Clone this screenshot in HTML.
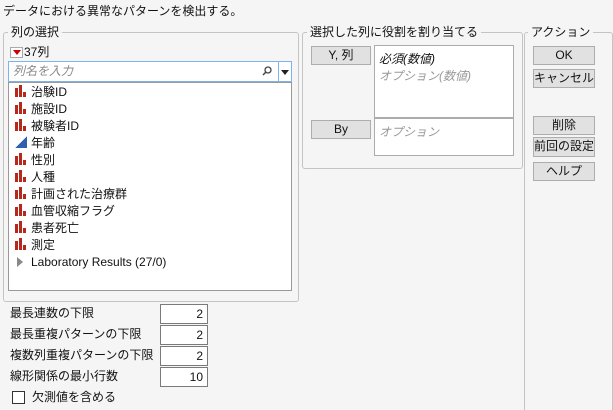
<!DOCTYPE html>
<html><head><meta charset="utf-8"><style>
html,body{margin:0;width:613px;height:410px;overflow:hidden}
body{background:#f5f5f5;font-family:"Liberation Sans","Noto Sans CJK JP",sans-serif;font-size:12px;color:#111;position:relative}
.a{position:absolute;white-space:nowrap}
.grp{position:absolute;border:1px solid #c4c4c4;border-radius:3px}
.lg{position:absolute;background:#f5f5f5;padding:0 3px;top:-9px;line-height:16px}
.btn{position:absolute;background:#e1e1e1;border:1px solid #adadad;text-align:center;line-height:17px;box-sizing:border-box}
.box{position:absolute;background:#fff;border:1px solid #acacac;box-sizing:border-box}
.it{position:absolute;left:6px;height:17px;line-height:17px}
.it i{display:inline-block;width:12px;height:12px;vertical-align:-1px;margin-right:4px}
.b{background:linear-gradient(#b5281b,#b5281b) 0 3px/3px 9px no-repeat,linear-gradient(#b5281b,#b5281b) 4px 0/3px 12px no-repeat,linear-gradient(#b5281b,#b5281b) 8px 7px/3px 5px no-repeat}
.num{position:absolute;left:160px;width:48px;height:20px;background:#fff;border:1px solid #7a7a7a;box-sizing:border-box;text-align:right;padding-right:4px;line-height:18px}
.gy{color:#999;font-style:italic}
</style></head><body>
<div class="a" style="left:3px;top:3px;line-height:16px">データにおける異常なパターンを検出する。</div>

<div class="grp" style="left:3px;top:32px;width:294px;height:268px">
 <div class="lg" style="left:4px">列の選択</div>
</div>
<div class="a" style="left:10px;top:47px;width:11px;height:9px;background:#fff;border:1px solid #aaa"><div style="position:absolute;left:2px;top:2px;border-left:4px solid transparent;border-right:4px solid transparent;border-top:5px solid #c00"></div></div>
<div class="a" style="left:24px;top:44px;line-height:16px">37列</div>
<div class="box" style="left:8px;top:61px;width:284px;height:21px;border-color:#7eb4ea"></div>
<div class="a gy" style="left:13px;top:63px;line-height:16px;color:#888">列名を入力</div>
<svg class="a" style="left:262px;top:66px" width="10" height="10"><circle cx="6" cy="4" r="3" fill="none" stroke="#444" stroke-width="1.3"/><line x1="4" y1="6" x2="1" y2="9" stroke="#444" stroke-width="1.5"/></svg>
<div class="a" style="left:278px;top:61px;width:1px;height:21px;background:#7eb4ea"></div>
<div class="a" style="left:281px;top:70px;border-left:4px solid transparent;border-right:4px solid transparent;border-top:5px solid #222"></div>
<div class="box" style="left:8px;top:82px;width:284px;height:209px;border-color:#999">
 <div class="it" style="top:1px"><i class="b"></i>治験ID</div>
 <div class="it" style="top:18px"><i class="b"></i>施設ID</div>
 <div class="it" style="top:35px"><i class="b"></i>被験者ID</div>
 <div class="it" style="top:52px"><i style="background:linear-gradient(to top left,#2f5faf 50%,transparent 50%)"></i>年齢</div>
 <div class="it" style="top:69px"><i class="b"></i>性別</div>
 <div class="it" style="top:86px"><i class="b"></i>人種</div>
 <div class="it" style="top:103px"><i class="b"></i>計画された治療群</div>
 <div class="it" style="top:120px"><i class="b"></i>血管収縮フラグ</div>
 <div class="it" style="top:137px"><i class="b"></i>患者死亡</div>
 <div class="it" style="top:154px"><i class="b"></i>測定</div>
 <div class="it" style="top:171px;left:8px"><span style="display:inline-block;width:0;height:0;border-top:5px solid transparent;border-bottom:5px solid transparent;border-left:6px solid #888;margin-right:8px;vertical-align:-1px"></span>Laboratory Results (27/0)</div>
</div>

<div class="grp" style="left:302px;top:32px;width:219px;height:135px">
 <div class="lg" style="left:4px">選択した列に役割を割り当てる</div>
</div>
<div class="btn" style="left:311px;top:46px;width:60px;height:19px">Y, 列</div>
<div class="box" style="left:374px;top:45px;width:140px;height:73px">
 <div class="a" style="left:4px;top:4px;font-style:italic">必須(数値)</div>
 <div class="a gy" style="left:4px;top:21px">オプション(数値)</div>
</div>
<div class="btn" style="left:311px;top:120px;width:60px;height:19px">By</div>
<div class="box" style="left:374px;top:118px;width:140px;height:38px">
 <div class="a gy" style="left:4px;top:4px">オプション</div>
</div>

<div class="grp" style="left:524px;top:32px;width:87px;height:390px">
 <div class="lg" style="left:3px">アクション</div>
</div>
<div class="btn" style="left:533px;top:46px;width:62px;height:19px">OK</div>
<div class="btn" style="left:533px;top:69px;width:62px;height:19px">キャンセル</div>
<div class="btn" style="left:533px;top:116px;width:62px;height:19px">削除</div>
<div class="btn" style="left:533px;top:137px;width:62px;height:20px">前回の設定</div>
<div class="btn" style="left:533px;top:162px;width:62px;height:19px">ヘルプ</div>

<div class="a" style="left:10px;top:305px;line-height:16px">最長連数の下限</div>
<div class="num" style="top:304px">2</div>
<div class="a" style="left:10px;top:326px;line-height:16px">最長重複パターンの下限</div>
<div class="num" style="top:325px">2</div>
<div class="a" style="left:10px;top:347px;line-height:16px">複数列重複パターンの下限</div>
<div class="num" style="top:346px">2</div>
<div class="a" style="left:10px;top:368px;line-height:16px">線形関係の最小行数</div>
<div class="num" style="top:367px">10</div>
<div class="a" style="left:12px;top:391px;width:13px;height:13px;background:#fff;border:1px solid #333;box-sizing:border-box"></div>
<div class="a" style="left:32px;top:389px;line-height:16px">欠測値を含める</div>
</body></html>
